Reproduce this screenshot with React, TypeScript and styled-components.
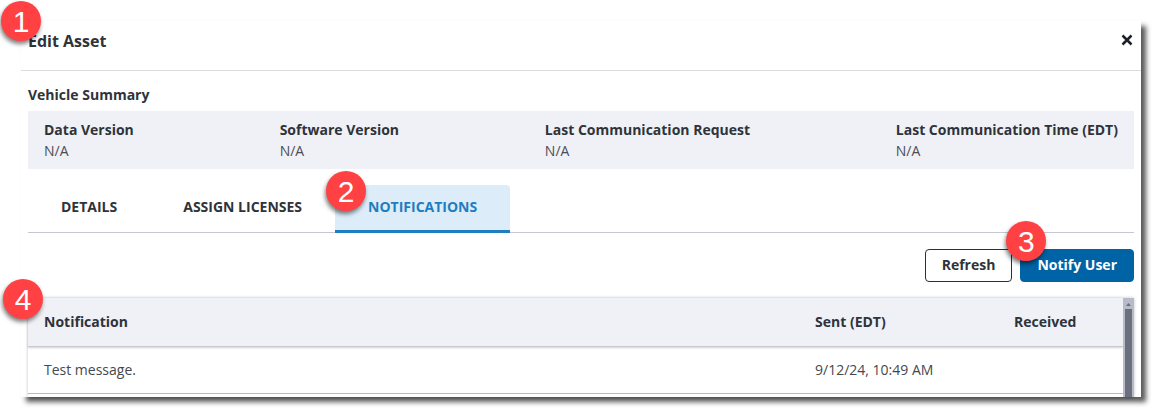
import React from "react";
import styled, { createGlobalStyle, css } from "styled-components";

const GlobalStyle = createGlobalStyle`
  *, *::before, *::after { box-sizing: border-box; }
  body {
    margin: 0;
    background: #fff;
    color: #2f333a;
    font: 14px/20px "Open Sans", "Noto Sans", sans-serif;
  }
  button { font-family: inherit; cursor: pointer; }
`;

const Page = styled.main`
  padding: 21px 15px 14px 21px;
`;

const Dialog = styled.section`
  background: #fff;
  box-shadow: 5px 5px 5px rgba(0, 0, 0, 0.65);
`;

const DialogHeader = styled.header`
  display: flex;
  align-items: center;
  justify-content: space-between;
  height: 50px;
  padding: 0 8px 10px 7px;
  border-bottom: 1px solid #dcdcde;
`;

const Title = styled.h1`
  position: relative;
  margin: 0;
  font-size: 16px;
  line-height: 24px;
  font-weight: 700;
`;

const CloseButton = styled.button`
  display: flex;
  padding: 0 0 2px;
  border: 0;
  background: none;
  color: #1d2127;
`;

const DialogBody = styled.div`
  padding: 14px 7px 0;
`;

const SectionTitle = styled.h2`
  margin: 0 0 6px;
  font-size: 14px;
  line-height: 20px;
  font-weight: 700;
`;

const Summary = styled.dl`
  display: flex;
  justify-content: space-between;
  margin: 0 0 16px;
  padding: 8px 16px;
  background: #f0f1f7;
`;

const SummaryLabel = styled.dt`
  line-height: 21px;
  font-weight: 700;
`;

const SummaryValue = styled.dd`
  margin: 0;
  line-height: 21px;
  color: #4b4e55;
`;

const TabList = styled.div`
  display: flex;
  border-bottom: 1px solid #c6c7d2;
`;

const Tab = styled.button<{ $active?: boolean }>`
  position: relative;
  height: 48px;
  margin-bottom: -1px;
  padding: 0 33px 2px;
  border: 0;
  border-bottom: 3px solid transparent;
  background: none;
  color: #2f333a;
  font-size: 14px;
  line-height: 20px;
  font-weight: 700;
  ${({ $active }) =>
    $active &&
    css`
      border-bottom-color: #1f7dc0;
      border-radius: 4px 4px 0 0;
      background: #dcecf9;
      color: #1f7dc0;
    `}
`;

const Actions = styled.div`
  display: flex;
  justify-content: flex-end;
  gap: 8px;
  padding: 16px 0;
`;

const ActionButton = styled.button<{ $primary?: boolean }>`
  position: relative;
  height: 33px;
  padding: 0 16px 2px;
  border: 1px solid ${({ $primary }) => ($primary ? "#0063a5" : "#2b2f36")};
  border-radius: 4px;
  background: ${({ $primary }) => ($primary ? "#0063a5" : "#fff")};
  color: ${({ $primary }) => ($primary ? "#fff" : "#2f333a")};
  font-size: 14px;
  line-height: 20px;
  font-weight: 700;
`;

const TableFrame = styled.div`
  position: relative;
  display: flex;
  box-shadow: 0 0 3px rgba(0, 0, 0, 0.25);
`;

const Table = styled.table`
  flex: 1;
  min-width: 0;
  margin-bottom: 3px;
  border-collapse: separate;
  border-spacing: 0;
  table-layout: fixed;
  text-align: left;
`;

const HeadCell = styled.th<{ $width?: number }>`
  width: ${({ $width }) => ($width ? `${$width}px` : "auto")};
  height: 49px;
  padding: 0 16px;
  border-bottom: 1px solid #c9c9cd;
  background: #f0f1f7;
  font-weight: 700;
`;

const HeadRow = styled.tr`
  box-shadow: 0 1px 2px rgba(0, 0, 0, 0.18);
`;

const Cell = styled.td`
  height: 47px;
  padding: 0 16px;
  border-bottom: 1px solid #b9bac8;
  color: #45484f;
`;

const ScrollTrack = styled.div`
  display: flex;
  flex-direction: column;
  align-items: center;
  width: 11px;
  background: #b9bac8;
`;

const ScrollArrow = styled.svg`
  display: block;
  flex: none;
`;

const ScrollThumb = styled.div`
  flex: 1;
  width: 7px;
  background: #6a707e;
`;

const Badge = styled.span<{ $left: number; $top: number }>`
  position: absolute;
  z-index: 2;
  left: ${({ $left }) => $left}px;
  top: ${({ $top }) => $top}px;
  width: 40px;
  height: 40px;
  border-radius: 50%;
  background: #ff4144;
  box-shadow: -1px 3px 4px rgba(0, 0, 0, 0.5);
  color: #fff;
  font: 400 30px/42px "Liberation Sans", Arial, sans-serif;
  text-align: center;
`;

const summary = [
  "Data Version",
  "Software Version",
  "Last Communication Request",
  "Last Communication Time (EDT)",
];

export default function App() {
  return (
    <>
      <GlobalStyle />
      <Page>
        <Dialog role="dialog" aria-labelledby="dialog-title">
          <DialogHeader>
            <Title id="dialog-title">
              Edit Asset
              <Badge $left={-27} $top={-28}>1</Badge>
            </Title>
            <CloseButton type="button" aria-label="Close">
              <svg width="12" height="12" viewBox="0 0 12 12" aria-hidden="true">
                <path d="M1.5 1.5 10.5 10.5M10.5 1.5 1.5 10.5" stroke="currentColor" strokeWidth="2.5" />
              </svg>
            </CloseButton>
          </DialogHeader>
          <DialogBody>
            <SectionTitle>Vehicle Summary</SectionTitle>
            <Summary>
              {summary.map((label) => (
                <div key={label}>
                  <SummaryLabel>{label}</SummaryLabel>
                  <SummaryValue>N/A</SummaryValue>
                </div>
              ))}
            </Summary>
            <TabList role="tablist">
              <Tab type="button" role="tab" aria-selected={false}>DETAILS</Tab>
              <Tab type="button" role="tab" aria-selected={false}>ASSIGN LICENSES</Tab>
              <Tab type="button" role="tab" aria-selected $active>
                NOTIFICATIONS
                <Badge $left={-9} $top={-14}>2</Badge>
              </Tab>
            </TabList>
            <Actions>
              <ActionButton type="button">Refresh</ActionButton>
              <ActionButton type="button" $primary>
                Notify User
                <Badge $left={-15} $top={-29}>3</Badge>
              </ActionButton>
            </Actions>
            <TableFrame>
              <Table>
                <thead>
                  <HeadRow>
                    <HeadCell scope="col">Notification</HeadCell>
                    <HeadCell scope="col" $width={199}>Sent (EDT)</HeadCell>
                    <HeadCell scope="col" $width={125}>Received</HeadCell>
                  </HeadRow>
                </thead>
                <tbody>
                  <tr>
                    <Cell>Test message.</Cell>
                    <Cell>9/12/24, 10:49 AM</Cell>
                    <Cell />
                  </tr>
                </tbody>
              </Table>
              <ScrollTrack>
                <ScrollArrow width="11" height="11" viewBox="0 0 11 11" aria-hidden="true">
                  <path d="M3 8 5.5 5 8 8Z" fill="#6a707e" />
                </ScrollArrow>
                <ScrollThumb />
              </ScrollTrack>
              <Badge $left={-25} $top={-19}>4</Badge>
            </TableFrame>
          </DialogBody>
        </Dialog>
      </Page>
    </>
  );
}
